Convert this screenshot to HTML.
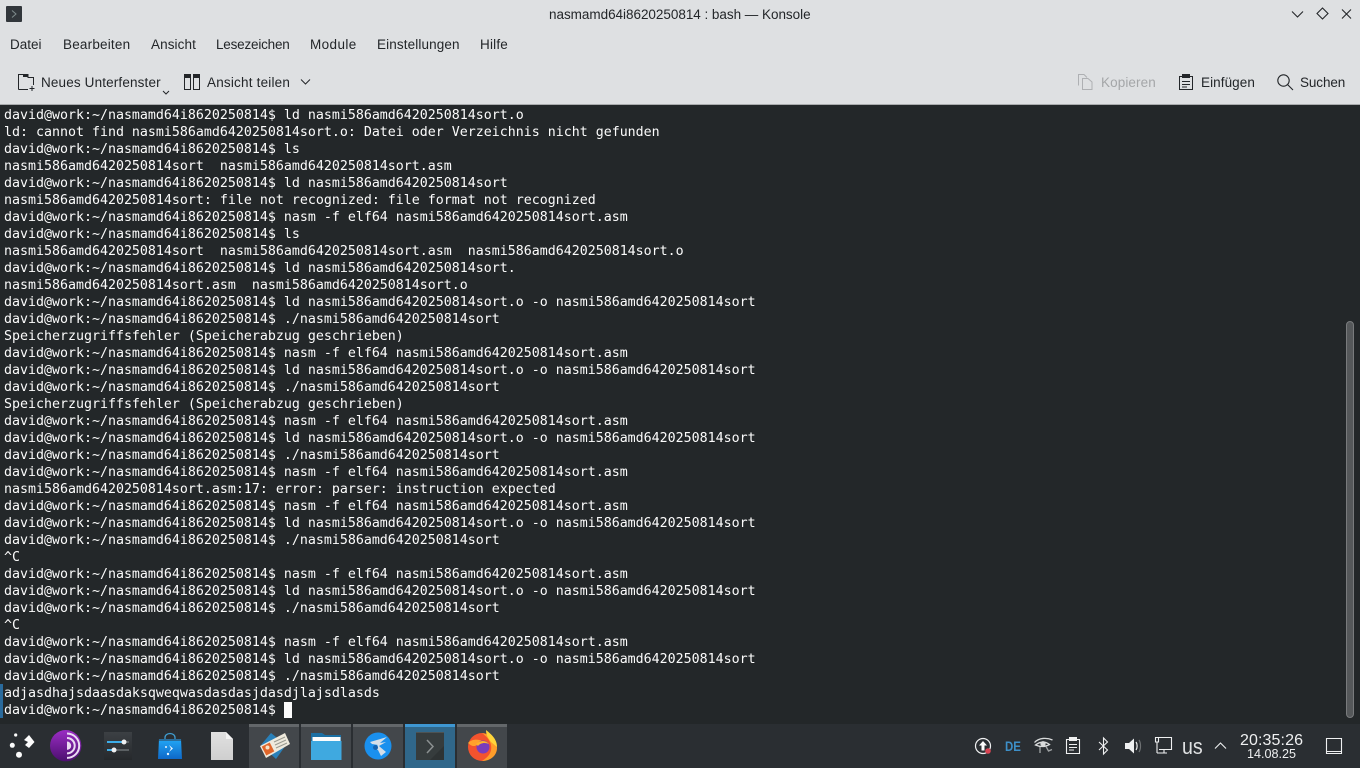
<!DOCTYPE html>
<html lang="de"><head><meta charset="utf-8"><title>Konsole</title>
<style>
html,body{margin:0;padding:0;width:1360px;height:768px;overflow:hidden;background:#232729}
.a{position:absolute;white-space:pre}
.u{font-family:"Liberation Sans",sans-serif;font-size:13.5px;color:#232629;line-height:18px;letter-spacing:.2px}
#top{position:absolute;left:0;top:0;width:1360px;height:104px;background:#dee0e2;border-bottom:1px solid #a9abad}
#term{position:absolute;left:4px;top:107px;margin:0;font-family:"DejaVu Sans Mono",monospace;font-size:13.29px;line-height:17px;color:#fcfcfc}
#panel{position:absolute;left:0;top:724px;width:1360px;height:44px;background:#2a2e32}
svg{position:absolute;overflow:visible}
.tb{position:absolute;top:724px;width:50px;height:44px;background:#43474b;border-top:3px solid #63676a;box-sizing:border-box}
</style></head><body>
<div id="top"></div>
<svg style="left:6px;top:6px" width="16" height="16"><rect width="16" height="16" rx="1" fill="#31363b"/><path d="M6 4.500 10 8 6 11.500" fill="none" stroke="#7f8c8d" stroke-width="1"/></svg>
<div class="a u" style="left:549px;top:6px;letter-spacing:-.03px">nasmamd64i8620250814 : bash — Konsole</div>
<svg style="left:1290px;top:8px" width="64" height="14" fill="none" stroke="#232629" stroke-width="1.100"><path d="M2 3.500 7.500 9 13 3.500"/><path d="M32.500 0 38 5.500 32.500 11 27 5.500Z"/><path d="M52 1.500 61 10.500M61 1.500 52 10.500"/></svg>
<div class="a u" style="left:10px;top:36px;letter-spacing:0">Datei</div>
<div class="a u" style="left:63px;top:36px">Bearbeiten</div>
<div class="a u" style="left:151px;top:36px;letter-spacing:.1px">Ansicht</div>
<div class="a u" style="left:216px;top:36px;letter-spacing:-.2px">Lesezeichen</div>
<div class="a u" style="left:310px;top:36px;letter-spacing:.4px">Module</div>
<div class="a u" style="left:377px;top:36px;letter-spacing:.12px">Einstellungen</div>
<div class="a u" style="left:480px;top:36px">Hilfe</div>
<svg style="left:18px;top:74px" width="18" height="17" fill="none" stroke="#232629" stroke-width="1"><path d="M.5 15.500V.5H10V3.500H15.500V11M.5 15.500H10"/><rect x="5" y="0" width="5.500" height="3" fill="#232629" stroke="none"/><path d="M14 12V17M11.500 14.500H16.500"/></svg>
<div class="a u" style="left:41px;top:74px;letter-spacing:.15px">Neues Unterfenster</div>
<svg style="left:162px;top:90px" width="8" height="6" fill="none" stroke="#232629"><path d="M1 1 4 4 7 1"/></svg>
<svg style="left:184px;top:74px" width="16" height="16" fill="none" stroke="#232629" stroke-width="1"><path d="M.5 3.500H6.500V15.500H.5ZM9.500 3.500H15.500V15.500H9.500Z"/><rect width="7" height="3.500" fill="#232629" stroke="none"/><rect x="9" width="7" height="3.500" fill="#232629" stroke="none"/></svg>
<div class="a u" style="left:207px;top:74px">Ansicht teilen</div>
<svg style="left:300px;top:78px" width="12" height="8" fill="none" stroke="#232629"><path d="M1 1.500 5.500 6 10 1.500"/></svg>
<svg style="left:1078px;top:74px" width="15" height="16" fill="none" stroke="#aeb0b3"><path d="M.5 11.500V.5H6L9 3.500M4.500 15.500V4.500H10L14 8V15.500Z"/></svg>
<div class="a u" style="left:1101px;top:74px;color:#a4a6a8;letter-spacing:.1px">Kopieren</div>
<svg style="left:1179px;top:74px" width="15" height="16" fill="none" stroke="#232629"><path d="M3 2.500H.5V15.500H13.500V2.500H11"/><rect x="3" y="0" width="8" height="4" fill="#232629" stroke="none"/><path d="M3 7.500H11M3 10.500H11M3 13H8"/></svg>
<div class="a u" style="left:1201px;top:74px;letter-spacing:.08px">Einfügen</div>
<svg style="left:1277px;top:74px" width="17" height="17" fill="none" stroke="#232629" stroke-width="1.100"><circle cx="6.500" cy="6.500" r="5.700"/><path d="M10.500 10.500 16 16"/></svg>
<div class="a u" style="left:1300px;top:74px;letter-spacing:-.1px">Suchen</div>

<pre id="term">david@work:~/nasmamd64i8620250814$ ld nasmi586amd6420250814sort.o
ld: cannot find nasmi586amd6420250814sort.o: Datei oder Verzeichnis nicht gefunden
david@work:~/nasmamd64i8620250814$ ls
nasmi586amd6420250814sort  nasmi586amd6420250814sort.asm
david@work:~/nasmamd64i8620250814$ ld nasmi586amd6420250814sort
nasmi586amd6420250814sort: file not recognized: file format not recognized
david@work:~/nasmamd64i8620250814$ nasm -f elf64 nasmi586amd6420250814sort.asm
david@work:~/nasmamd64i8620250814$ ls
nasmi586amd6420250814sort  nasmi586amd6420250814sort.asm  nasmi586amd6420250814sort.o
david@work:~/nasmamd64i8620250814$ ld nasmi586amd6420250814sort.
nasmi586amd6420250814sort.asm  nasmi586amd6420250814sort.o
david@work:~/nasmamd64i8620250814$ ld nasmi586amd6420250814sort.o -o nasmi586amd6420250814sort
david@work:~/nasmamd64i8620250814$ ./nasmi586amd6420250814sort
Speicherzugriffsfehler (Speicherabzug geschrieben)
david@work:~/nasmamd64i8620250814$ nasm -f elf64 nasmi586amd6420250814sort.asm
david@work:~/nasmamd64i8620250814$ ld nasmi586amd6420250814sort.o -o nasmi586amd6420250814sort
david@work:~/nasmamd64i8620250814$ ./nasmi586amd6420250814sort
Speicherzugriffsfehler (Speicherabzug geschrieben)
david@work:~/nasmamd64i8620250814$ nasm -f elf64 nasmi586amd6420250814sort.asm
david@work:~/nasmamd64i8620250814$ ld nasmi586amd6420250814sort.o -o nasmi586amd6420250814sort
david@work:~/nasmamd64i8620250814$ ./nasmi586amd6420250814sort
david@work:~/nasmamd64i8620250814$ nasm -f elf64 nasmi586amd6420250814sort.asm
nasmi586amd6420250814sort.asm:17: error: parser: instruction expected
david@work:~/nasmamd64i8620250814$ nasm -f elf64 nasmi586amd6420250814sort.asm
david@work:~/nasmamd64i8620250814$ ld nasmi586amd6420250814sort.o -o nasmi586amd6420250814sort
david@work:~/nasmamd64i8620250814$ ./nasmi586amd6420250814sort
^C
david@work:~/nasmamd64i8620250814$ nasm -f elf64 nasmi586amd6420250814sort.asm
david@work:~/nasmamd64i8620250814$ ld nasmi586amd6420250814sort.o -o nasmi586amd6420250814sort
david@work:~/nasmamd64i8620250814$ ./nasmi586amd6420250814sort
^C
david@work:~/nasmamd64i8620250814$ nasm -f elf64 nasmi586amd6420250814sort.asm
david@work:~/nasmamd64i8620250814$ ld nasmi586amd6420250814sort.o -o nasmi586amd6420250814sort
david@work:~/nasmamd64i8620250814$ ./nasmi586amd6420250814sort
adjasdhajsdaasdaksqweqwasdasdasjdasdjlajsdlasds
david@work:~/nasmamd64i8620250814$ </pre>
<div class="a" style="left:284px;top:702px;width:8px;height:16px;background:#fcfcfc"></div>
<div class="a" style="left:0;top:684px;width:3px;height:34px;background:#2a6a9c"></div>
<div class="a" style="left:1346px;top:321px;width:8px;height:397px;border-radius:4px;background:#55585a;border:1px solid #797b7d;box-sizing:border-box"></div>

<div id="panel"></div>
<svg style="left:9px;top:732px" width="26" height="27" fill="#fcfcfc"><circle cx="3.300" cy="13.300" r="2.500"/><circle cx="6.700" cy="3" r="1.600"/><circle cx="10" cy="22.700" r="3"/><path d="M15 8 20 3 25.500 10 20 16 16 13 19 10Z"/></svg>
<svg style="left:50px;top:730px" width="32" height="32"><defs><linearGradient id="t" x1="0" y1="0" x2="0" y2="1"><stop offset="0" stop-color="#9a2dc4"/><stop offset="1" stop-color="#4b0f6e"/></linearGradient></defs><circle cx="15.700" cy="15.700" r="15.700" fill="url(#t)"/><g fill="none" stroke="#eadcf2" stroke-width="2"><path d="M17 3.500A12.200 12.200 0 0 1 17 27.900"/><path d="M17 8A7.700 7.700 0 0 1 17 23.400"/></g><path d="M17 11.500A4.200 4.200 0 0 1 17 19.900Z" fill="#eadcf2"/></svg>
<svg style="left:104px;top:732px" width="28" height="28"><defs><linearGradient id="s" x1="0" y1="0" x2="0" y2="1"><stop offset="0" stop-color="#3c4044"/><stop offset="1" stop-color="#26292c"/></linearGradient></defs><rect width="28" height="28" fill="url(#s)"/><rect x="3" y="9" width="22" height="2" fill="#5b6063"/><rect x="3" y="9" width="17" height="2" fill="#3daee9"/><circle cx="20" cy="10" r="2.500" fill="#eff0f1"/><rect x="3" y="17" width="22" height="2" fill="#5b6063"/><rect x="3" y="17" width="9" height="2" fill="#3daee9"/><circle cx="10" cy="18" r="2.500" fill="#eff0f1"/></svg>
<svg style="left:158px;top:733px" width="24" height="26"><defs><linearGradient id="b" x1="0" y1="0" x2="0" y2="1"><stop offset="0" stop-color="#23a8f7"/><stop offset="1" stop-color="#0e68c8"/></linearGradient></defs><path d="M7 8V4.500A5 4 0 0 1 17 4.500V8" fill="none" stroke="#3f9ccf" stroke-width="1.300"/><path d="M1 6H23L24 26H0Z" fill="url(#b)"/><rect x="1" y="6" width="22" height="2" fill="#2a6d9b"/><path d="M11 12 15 15.500 11 19 13 15.500Z" fill="#e8f5fe"/><circle cx="8" cy="14" r="1" fill="#e8f5fe"/><circle cx="10" cy="21" r="1.200" fill="#e8f5fe"/></svg>
<svg style="left:211px;top:732px" width="22" height="28"><defs><linearGradient id="f" x1="0" y1="0" x2="0" y2="1"><stop offset="0" stop-color="#e0e0e0"/><stop offset="1" stop-color="#cfcfcf"/></linearGradient></defs><path d="M0 0H15L22 7V28H0Z" fill="url(#f)"/><path d="M15 0 22 7H15Z" fill="#f4f4f4"/></svg>

<div class="tb" style="left:249px"></div>
<div class="tb" style="left:301px"></div>
<div class="tb" style="left:353px"></div>
<div class="tb" style="left:405px;background:#30678a;border-top-color:#3e97d2"></div>
<div class="tb" style="left:457px"></div>
<svg style="left:258px;top:731px" width="33" height="30"><path d="M3 14 13 2 28 14 18 28Z" fill="#2980b9"/><path d="M2 15 27 2 32 13 8 27Z" fill="#eee9dc"/><rect x="5.500" y="13" width="9" height="10" fill="#e0662a" transform="rotate(-27 10 18)"/><circle cx="9.500" cy="16.500" r="2" fill="#f5e2c8"/><path d="M16 11 27 6M17 14 28 9M18 17 29 12" stroke="#9a9a90" stroke-width="1"/></svg>
<svg style="left:311px;top:732px" width="31" height="28"><path d="M0 1H11L14 3H30V27H0Z" fill="#1b6fa3"/><rect x="1.500" y="5" width="28" height="4" fill="#fcfcfc"/><path d="M0 9H30.500V28H0Z" fill="#3fa9e0"/></svg>
<svg style="left:364px;top:732px" width="28" height="28"><circle cx="14" cy="14" r="13.500" fill="#1a90ee"/><path d="M6 10 23 5 16 11 22 10 15 14 22 20 17 24 14 18 9 16 14 13 8 12Z" fill="#d5dee8"/><circle cx="11.500" cy="15.500" r="2.500" fill="#1462b0"/></svg>
<svg style="left:416px;top:732px" width="28" height="28"><rect width="28" height="28" fill="#363c3d"/><rect width="28" height="1" fill="#4d5354"/><path d="M11 8 17 14.500 11 21" fill="none" stroke="#8b9091" stroke-width="1.500"/><path d="M28 28H14L28 14Z" fill="#000" opacity=".14"/></svg>
<svg style="left:467px;top:730px" width="31" height="31"><circle cx="15" cy="17" r="14" fill="#f3532e"/><path d="M15 3C24 5 30 11 30 18 30 25 24 31 15 31 23 26 25 21 24 15 23 10 19 6 15 3Z" fill="#ff9d2a"/><path d="M19 0C24 4 30 9 30 17L24 12C21 8 19 5 19 0Z" fill="#ffd53a"/><path d="M1 13C5 9 11 9 15 11L10 15C7 17 4 16 1 13Z" fill="#ffa12c"/><circle cx="16" cy="17" r="6.500" fill="#7a3cbb"/><path d="M9 14C13 10 19 10 22 14 18 12 13 13 11 16Z" fill="#ffb32a"/></svg>

<svg style="left:975px;top:737px" width="18" height="18"><circle cx="8" cy="9" r="7.500" fill="none" stroke="#eff0f1" stroke-width="1.200"/><path d="M8 4 12 8.500H9.500V13.500H6.500V8.500H4Z" fill="#fcfcfc"/><circle cx="13" cy="14" r="2.800" fill="#da4453"/></svg>
<div class="a" style="left:1005px;top:738px;font:bold 14px/16px 'Liberation Sans',sans-serif;color:#3d8fc8;transform:scaleX(.82);transform-origin:left">DE</div>
<svg style="left:1034px;top:737px" width="19" height="17" fill="none" stroke="#d8dadb" stroke-width="1.300"><path d="M.5 5.500C5 .5 13 .5 18.500 3"/><path d="M1.500 8C6 4.500 11 4 15.500 7.500 11 10 6 10 1.500 8Z"/><circle cx="9" cy="6.800" r="2" fill="#d8dadb"/><path d="M6 10V16M12 9.500 14.500 14 18 12.500" stroke="#a0a3a5"/></svg>
<svg style="left:1066px;top:737px" width="14" height="17" fill="none" stroke="#eff0f1" stroke-width="1.100"><path d="M3 2.500H.5V16.500H13.500V2.500H11"/><rect x="3" y="0" width="8" height="4" fill="#eff0f1" stroke="none"/><path d="M3 7.500H11M3 10.500H11M3 13H8"/></svg>
<svg style="left:1098px;top:737px" width="11" height="18" fill="none" stroke="#eff0f1" stroke-width="1.100"><path d="M1 5 9.500 13 5.500 17V1L9.500 5 1 13"/></svg>
<svg style="left:1125px;top:738px" width="17" height="16"><path d="M0 5H4L9 .5V15.500L4 11H0Z" fill="#eff0f1"/><path d="M11 4C12.500 6 12.500 10 11 12" fill="none" stroke="#eff0f1" stroke-width="1.200"/><path d="M14 2C16 5 16 11 14 14" fill="none" stroke="#6e7173" stroke-width="1.200"/></svg>
<svg style="left:1155px;top:737px" width="17" height="18" fill="none" stroke="#eff0f1" stroke-width="1.100"><path d="M4 .5H16.500V12.500H4M.5 .5H3.500V5H.5ZM2 5V16M2 16H12M9 13V16"/></svg>
<div class="a" style="left:1182px;top:735px;font:22.5px/24px 'Liberation Sans',sans-serif;color:#dfe1e2;transform:scaleX(.87);transform-origin:left">us</div>
<svg style="left:1214px;top:741px" width="13" height="9" fill="none" stroke="#eff0f1" stroke-width="1.100"><path d="M1 7.500 6.500 2 12 7.500"/></svg>
<div class="a" style="left:1240px;top:732px;font:16px/18px 'Liberation Sans',sans-serif;color:#eff0f1;letter-spacing:.1px">20:35:26</div>
<div class="a" style="left:1247px;top:747px;font:12.6px/15px 'Liberation Sans',sans-serif;color:#eff0f1">14.08.25</div>
<svg style="left:1326px;top:738px" width="16" height="16" fill="none" stroke="#eff0f1" stroke-width="1.100"><path d="M.5 .5H15.500V15.500H.5ZM.5 13.500H15.500"/></svg>
</body></html>
